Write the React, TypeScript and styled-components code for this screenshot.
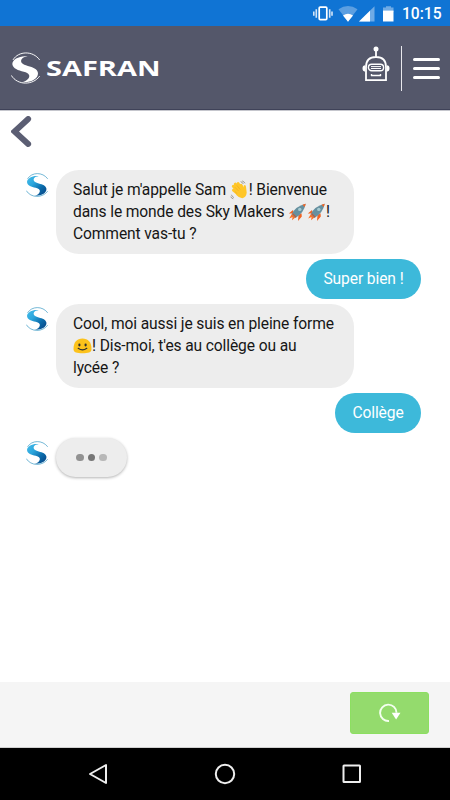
import React from 'react';
import styled, { createGlobalStyle } from 'styled-components';

const GlobalStyle = createGlobalStyle`
  * { box-sizing: border-box; }
  body { margin: 0; background: #fff; font-family: Roboto, sans-serif; }
  svg { display: block; flex: none; }
`;

const Screen = styled.div`
  width: 450px;
  height: 800px;
  display: flex;
  flex-direction: column;
  overflow: hidden;
  background: #fff;
`;

const StatusBar = styled.div`
  height: 26px;
  flex: none;
  background: #1074d4;
  display: flex;
  justify-content: flex-end;
  align-items: center;
  padding: 2px 8px 0 0;
  color: #fff;
`;

const Clock = styled.span`
  font-size: 15.6px;
  font-weight: 500;
  line-height: 20px;
  width: 40px;
  margin-left: 7px;
  white-space: nowrap;
`;

const Header = styled.header`
  height: 84px;
  flex: none;
  background: #54576a;
  border-bottom: 1px solid #3f4258;
  display: flex;
  align-items: flex-start;
  padding: 20px 10px 0 11px;
`;

const Brand = styled.div`
  display: flex;
  flex: 1;
  gap: 6px;
  padding-top: 6px;
`;

const Divider = styled.div`
  width: 1px;
  height: 45px;
  background: #e8e8ec;
  margin: 0 11px 0 11px;
`;

const Menu = styled.div`
  display: flex;
  flex-direction: column;
  gap: 6px;
  padding-top: 12px;
`;

const MenuLine = styled.span`
  width: 27px;
  height: 3px;
  border-radius: 1.5px;
  background: #fff;
`;

const Back = styled.div`
  height: 60px;
  flex: none;
  border-top: 1px solid #c5c6cd;
  padding: 5px 0 0 11px;
`;

const Chat = styled.main`
  flex: 1;
  padding: 0 29px 0 25px;
  display: flex;
  flex-direction: column;
  gap: 5px;
`;

const BotRow = styled.div`
  display: flex;
  gap: 8px;
`;

const Avatar = styled.div`
  width: 23px;
  padding: 3px 0 0 0.5px;
`;

const Bubble = styled.div`
  width: 298px;
  height: 84px;
  border-radius: 23px;
  background: #ededed;
  padding: 9px 0 0 17px;
  font-size: 15.6px;
  line-height: 22px;
  color: #161616;
`;

const Line = styled.div`
  display: flex;
  align-items: center;
  height: 22px;
  white-space: pre;
  letter-spacing: -0.12px;
`;

const Reply = styled.div<{ $width: number }>`
  align-self: flex-end;
  width: ${p => p.$width}px;
  height: 40px;
  border-radius: 20px;
  background: #3db9da;
  color: #fff;
  font-size: 15.6px;
  letter-spacing: -0.1px;
  line-height: 40px;
  text-align: center;
  white-space: nowrap;
`;

const Typing = styled.div`
  width: 71px;
  height: 39px;
  border-radius: 20px;
  background: #ededed;
  box-shadow: 0 1px 3px rgba(0, 0, 0, 0.3);
  display: flex;
  align-items: center;
  justify-content: center;
  gap: 4px;
`;

const Dot = styled.span<{ $color: string }>`
  width: 7.5px;
  height: 7.5px;
  border-radius: 50%;
  background: ${p => p.$color};
`;

const Footer = styled.footer`
  height: 66px;
  flex: none;
  background: #f5f5f5;
  border-bottom: 1px solid #d0d0d0;
  display: flex;
  justify-content: flex-end;
  padding: 10px 21px 0 0;
`;

const Restart = styled.div`
  width: 79px;
  height: 42px;
  border-radius: 3px;
  background: #94db6d;
  border: 1px solid #8cdf61;
  display: flex;
  align-items: center;
  justify-content: center;
`;

const NavBar = styled.nav`
  height: 52px;
  flex: none;
  background: #000;
  display: flex;
  align-items: center;
  justify-content: space-between;
  padding: 0 88px;
`;

function Mark({ width, height, fill, stroke }: { width: number; height: number; fill: string; stroke: string }) {
  return (
    <svg width={width} height={height} viewBox="0 0 86 94">
      <defs>
        <linearGradient id="ribbon" x1="0" y1="0" x2="1" y2="1">
          <stop offset="0" stopColor="#45bdea" />
          <stop offset=".35" stopColor="#2ba5dc" />
          <stop offset=".65" stopColor="#0b6cab" />
          <stop offset="1" stopColor="#063f80" />
        </linearGradient>
      </defs>
      <path
        fill={fill}
        d="M44 12C24 11 3 22 4 36C6 49 21 54 38 58C54 62 58 70 51 79C46 85 40 88 33 89C60 91 81 79 80 62C78 49 65 45 50 41C34 37 27 31 31 22C34 16 41 13 50 13Z"
      />
      <path fill="none" stroke={stroke} strokeWidth="2.8" d="M6 23C22-4 65-5 85 23M1 69C19 99 65 99 85 71" />
    </svg>
  );
}

function BotAvatar() {
  return (
    <Avatar>
      <Mark width={22} height={24} fill="url(#ribbon)" stroke="#3d9bc6" />
    </Avatar>
  );
}

function Wave() {
  return (
    <svg width="19" height="20" viewBox="0 0 20 20">
      <g fill="none" stroke="#ffc628" strokeLinecap="round" strokeWidth="3">
        <path d="M9 12L3.4 6.1M10 10L5.5 3.8M12 9L8.5 3.2M15 11L11.6 5M8 14L3.6 10.1" />
      </g>
      <path d="M5 11L12 6.6L14.5 9L14.4 5.4Q16 4 16.8 6.2L17.6 13Q17 18 13 18.6Q9.5 18.6 7 15.5Z" fill="#ffc628" />
      <path d="M5 7L9 11M7.2 5.1L10.7 9.5M5 11.5L7.6 13.8" stroke="#e9a51e" strokeWidth=".6" />
      <path d="M11.2 1.2Q13.1 1.7 14 3.7M12.8.4Q15 1.2 15.8 3M1.5 15Q2 17.2 4.2 18M.8 17Q1.5 18.9 3.5 19.3" fill="none" stroke="#77736b" strokeWidth=".7" />
    </svg>
  );
}

function Rocket() {
  return (
    <svg width="19" height="20" viewBox="0 0 19 20">
      <path d="M5 8L.8 11.5L5.8 11.4ZM10.5 13L10 19L13.8 14.5L13.5 11.2Z" fill="#f26322" />
      <path d="M4 11.7L1.2 16.4L4.6 15.1L4 18.2L8.2 14.8Z" fill="#fb7127" />
      <path d="M3.8 12.3Q7 4.5 17.7 1.8Q16 11 7.5 15.9Z" fill="#66909f" />
      <path d="M14.5 2.8L17.7 1.8L16.8 5.1Z" fill="#f26322" />
      <path d="M4.6 11.6L8.1 15.1" stroke="#c8572e" strokeWidth="1.2" />
      <circle cx="11.8" cy="7.4" r="1.7" fill="#a8cbd2" />
    </svg>
  );
}

function Smile() {
  return (
    <svg width="19" height="18" viewBox="0 0 19 18">
      <path d="M.5 12C.5 5 4 1.5 9.5 1.5S18.5 5 18.5 12C18.5 15.5 15 16.3 9.5 16.3S.5 15.5.5 12Z" fill="#fcc21b" />
      <ellipse cx="6.4" cy="8" rx="1.1" ry="1.4" fill="#2f2f2f" />
      <ellipse cx="12.6" cy="8" rx="1.1" ry="1.4" fill="#2f2f2f" />
      <path d="M5.2 11.3Q9.5 14.6 13.8 11.3" fill="none" stroke="#2f2f2f" strokeWidth="1.2" strokeLinecap="round" />
    </svg>
  );
}

function StatusIcons() {
  return (
    <svg width="83" height="20" viewBox="0 0 83 20">
      <rect x="7.2" y="3.1" width="7.6" height="12.5" rx="1" fill="none" stroke="#fff" strokeWidth="1.7" />
      <path d="M4.3 5.2V13.7M17.7 5.2V13.7M1.8 7.4V11.7M20 7.4V11.7" stroke="#d4e5f7" strokeWidth="1.6" />
      <path d="M26.5 5.3Q36 -1.2 45.5 5.3L36 17.7Z" fill="#5c9fe1" />
      <path d="M31 11.4Q36 8.2 41 11.4L36 17.7Z" fill="#fff" />
      <path d="M47 17.6L62.5 2.2V17.6Z" fill="#70abe5" />
      <path d="M47 17.6L58 6.8V17.6Z" fill="#fff" />
      <path d="M71 3.6H74V2.2H79V3.6H81.5V8H71Z" fill="#70abe5" />
      <path d="M71 6.6H81.5V17.5H71Z" fill="#fff" />
    </svg>
  );
}

export default function App() {
  return (
    <Screen>
      <GlobalStyle />
      <StatusBar>
        <StatusIcons />
        <Clock>10:15</Clock>
      </StatusBar>
      <Header>
        <Brand>
          <Mark width={29} height={32} fill="#fff" stroke="#fff" />
          <svg width="115" height="32" viewBox="0 0 115 32">
            <text x="0" y="23.5" textLength="114.5" lengthAdjust="spacingAndGlyphs" fontFamily="Open Sans, sans-serif" fontSize="21.5" fontWeight="700" fill="#fff">
              SAFRAN
            </text>
          </svg>
        </Brand>
        <svg width="28" height="36" viewBox="0 0 28 36" fill="none" stroke="#fff" strokeWidth="1.8">
          <circle cx="14" cy="3" r="2.5" fill="#fff" stroke="none" />
          <path d="M14 4V11M4 34.2V21Q4 11 14 11T24 21V34.2Z" />
          <path d="M3.2 19.2Q.5 19.2.5 22.3T3.2 25.7ZM24.8 19.2Q27.5 19.2 27.5 22.3T24.8 25.7Z" fill="#fff" stroke="none" />
          <rect x="6.4" y="18.2" width="15.2" height="6.6" rx="3.3" strokeWidth="1.4" />
          <path d="M9 20.6H19M9 22.5H19" strokeWidth="1" />
          <path d="M9 29.5H19M9.5 28V30M18.5 28V30" strokeWidth="1.4" />
        </svg>
        <Divider />
        <Menu>
          <MenuLine />
          <MenuLine />
          <MenuLine />
        </Menu>
      </Header>
      <Back>
        <svg width="21" height="32" viewBox="0 0 21 32">
          <path d="M17.2 3L3.6 15.5L17.2 28" fill="none" stroke="#5b5e73" strokeWidth="5.8" strokeLinecap="round" />
        </svg>
      </Back>
      <Chat>
        <BotRow>
          <BotAvatar />
          <Bubble>
            <Line>Salut je m'appelle Sam <Wave />! Bienvenue</Line>
            <Line>dans le monde des Sky Makers <Rocket /><Rocket />!</Line>
            <Line>Comment vas-tu ?</Line>
          </Bubble>
        </BotRow>
        <Reply $width={115}>Super bien !</Reply>
        <BotRow>
          <BotAvatar />
          <Bubble>
            <Line>Cool, moi aussi je suis en pleine forme</Line>
            <Line><Smile />! Dis-moi, t'es au collège ou au</Line>
            <Line>lycée ?</Line>
          </Bubble>
        </BotRow>
        <Reply $width={86}>Collège</Reply>
        <BotRow>
          <BotAvatar />
          <Typing>
            <Dot $color="#929292" />
            <Dot $color="#767676" />
            <Dot $color="#b8b8b8" />
          </Typing>
        </BotRow>
      </Chat>
      <Footer>
        <Restart>
          <svg width="22" height="20" viewBox="0 0 22 20">
            <path d="M10 18A8.2 8.2 0 1 1 17.5 9.8" fill="none" stroke="#f4fff0" strokeWidth="1.9" />
            <path d="M12.7 9.7H21.5L17.1 16.5Z" fill="#fff" />
          </svg>
        </Restart>
      </Footer>
      <NavBar>
        <svg width="20" height="22" viewBox="0 0 20 22">
          <path d="M18 2V20L2 11Z" fill="none" stroke="#eee" strokeWidth="2" strokeLinejoin="round" />
        </svg>
        <svg width="22" height="22" viewBox="0 0 22 22">
          <circle cx="11" cy="11" r="9.2" fill="none" stroke="#eee" strokeWidth="2" />
        </svg>
        <svg width="20" height="20" viewBox="0 0 20 20">
          <rect x="1.5" y="1.5" width="16.5" height="16.5" rx=".5" fill="none" stroke="#eee" strokeWidth="2" />
        </svg>
      </NavBar>
    </Screen>
  );
}
